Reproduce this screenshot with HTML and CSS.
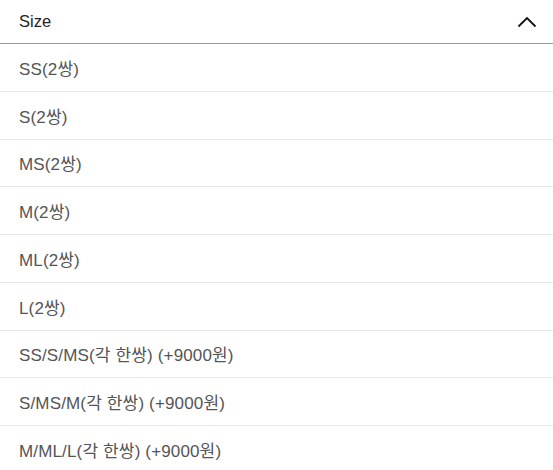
FILE: index.html
```html
<!DOCTYPE html>
<html lang="ko">
<head>
    <meta charset="UTF-8">
    <meta name="viewport" content="width=device-width, initial-scale=1.0">
    <title>Size</title>
    <link rel="stylesheet" href="styles.css">
</head>
<body>

<div class="size-select">
    <div class="size-head">
        <span>Size</span>
        <svg class="chevron" width="20" height="12" viewBox="0 0 20 12">
            <path d="M1.5 10.5 L10 2 L18.5 10.5" fill="none" stroke="#111" stroke-width="1.8"/>
        </svg>
    </div>
    <ul class="size-list">
        <li>SS(2쌍)</li>
        <li>S(2쌍)</li>
        <li>MS(2쌍)</li>
        <li>M(2쌍)</li>
        <li>ML(2쌍)</li>
        <li>L(2쌍)</li>
        <li>SS/S/MS(각 한쌍) (+9000원)</li>
        <li>S/MS/M(각 한쌍) (+9000원)</li>
        <li>M/ML/L(각 한쌍) (+9000원)</li>
    </ul>
</div>

</body>
</html>
```

FILE: styles.css
```css
body {
    margin: 0;
    background-color: #fff;
    font-family: "Liberation Sans", Arial, "Noto Sans CJK KR", sans-serif;
}
.size-select {
    width: 553px;
}
.size-head {
    display: flex;
    align-items: center;
    justify-content: space-between;
    height: 43px;
    padding: 0 16px 0 19px;
    border-bottom: 1px solid #999;
    font-size: 16.5px;
    color: #222;
}
.chevron {
    display: block;
}
.size-list {
    list-style: none;
    margin: 0;
    padding: 0;
}
.size-list li {
    display: flex;
    align-items: center;
    height: 46.75px;
    padding-left: 19px;
    border-bottom: 1px solid #e8e8e8;
    font-size: 17px;
    letter-spacing: 0.15px;
    color: #555;
}
```
